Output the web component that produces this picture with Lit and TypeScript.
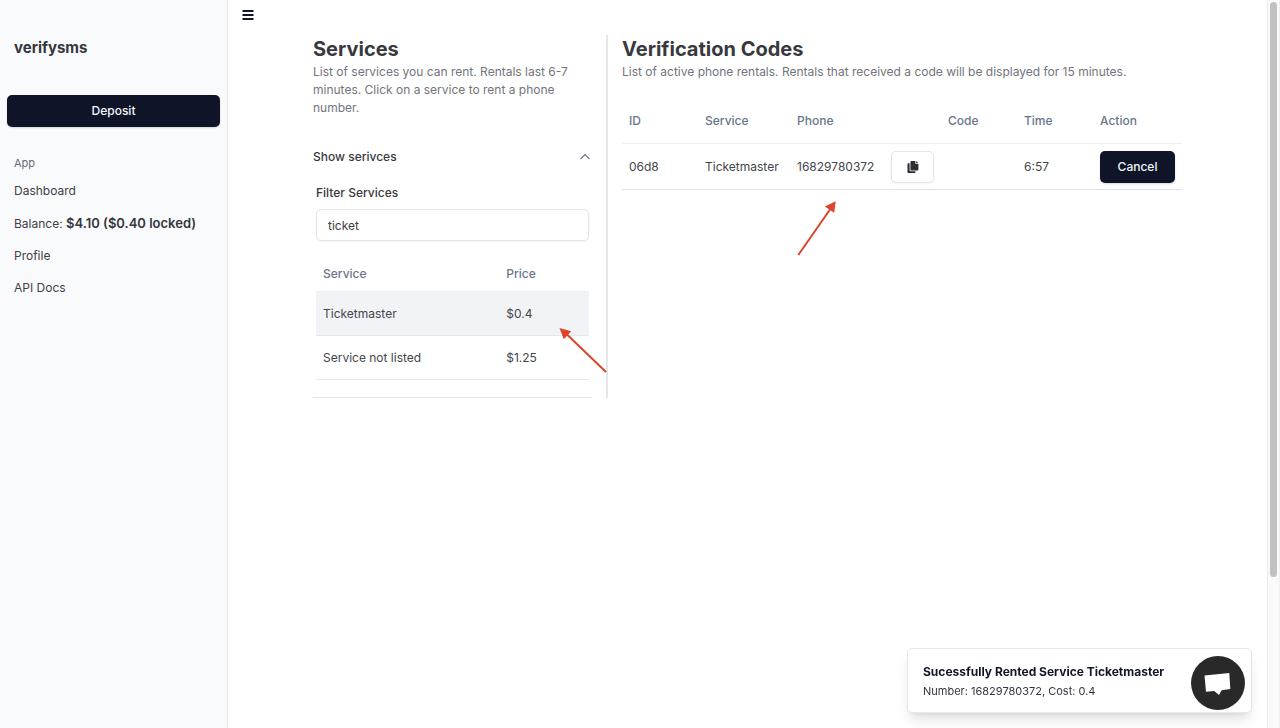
import { LitElement, html, css } from "lit";
import { customElement, property, state } from "lit/decorators.js";

interface Service {
  name: string;
  price: string;
}

interface Rental {
  id: string;
  service: string;
  phone: string;
  code: string;
  time: string;
}

@customElement("side-nav")
class SideNav extends LitElement {
  static styles = css`
    :host {
      display: block;
      box-sizing: border-box;
      background: #f9fafc;
      border-right: 1px solid #e5e7eb;
      padding: 33px 7px;
    }
    .brand {
      margin: 0;
      padding: 0 7px;
      font-size: 15px;
      line-height: 30px;
      font-weight: 700;
      color: #35363b;
    }
    .deposit {
      display: block;
      width: 100%;
      height: 32px;
      margin-top: 32px;
      border: 0;
      border-radius: 5px;
      background: #0f1428;
      color: #f5f6fa;
      font: 500 12px/18px Inter, sans-serif;
      box-shadow: 0 1px 2px rgba(0, 0, 0, 0.15);
    }
    .group {
      margin: 28px 0 4px;
      padding: 0 7px;
      font-size: 11px;
      line-height: 16px;
      font-weight: 400;
      color: #6b6c73;
    }
    .link {
      display: block;
      padding: 0 7px;
      font-size: 12px;
      line-height: 32px;
      color: #3f4046;
      text-decoration: none;
    }
    .amount {
      font-size: 13px;
      font-weight: 600;
      color: #35363b;
    }
  `;

  render() {
    return html`
      <h1 class="brand">verifysms</h1>
      <button class="deposit" type="button">Deposit</button>
      <h2 class="group">App</h2>
      <nav>
        <a class="link" href="#dashboard">Dashboard</a>
        <a class="link" href="#balance">Balance: <span class="amount">$4.10 ($0.40 locked)</span></a>
        <a class="link" href="#profile">Profile</a>
        <a class="link" href="#docs">API Docs</a>
      </nav>
    `;
  }
}

const panelStyles = css`
  .title {
    margin: 0;
    font-size: 20px;
    line-height: 28px;
    font-weight: 700;
    color: #38393e;
  }
  .lead {
    margin: 0;
    font-size: 12px;
    line-height: 18px;
    color: #73747c;
  }
  table {
    width: 100%;
    border-collapse: separate;
    border-spacing: 0;
    table-layout: fixed;
    font-size: 12px;
    line-height: 18px;
  }
  th {
    padding: 0 7px;
    text-align: left;
    font-weight: 500;
    color: #68758b;
    border-bottom: 1px solid #eeeff2;
  }
  td {
    padding: 0 7px;
    color: #44454b;
    white-space: nowrap;
  }
`;

@customElement("service-list")
class ServiceList extends LitElement {
  @state() private services: Service[] = [
    { name: "Ticketmaster", price: "$0.4" },
    { name: "Service not listed", price: "$1.25" },
  ];

  static styles = [
    panelStyles,
    css`
      :host {
        display: block;
        position: relative;
      }
      .toggle {
        display: flex;
        align-items: center;
        justify-content: space-between;
        width: 100%;
        margin-top: 16px;
        padding: 15px 0;
        border: 0;
        background: none;
        font: 500 12px/18px Inter, sans-serif;
        color: #38393e;
      }
      .chevron {
        width: 14px;
        height: 14px;
      }
      .body {
        padding: 3px 3px 17px;
        border-bottom: 1px solid #e4e5e9;
      }
      .label {
        display: block;
        font-size: 12px;
        line-height: 18px;
        font-weight: 500;
        color: #38393e;
      }
      .filter {
        display: block;
        box-sizing: border-box;
        width: 100%;
        height: 32px;
        margin: 7px 0 15px;
        padding: 0 11px;
        border: 1px solid #e4e5ec;
        border-radius: 5px;
        background: #fff;
        font: 400 12px/18px Inter, sans-serif;
        color: #3f4046;
        box-shadow: 0 1px 2px rgba(0, 0, 0, 0.05);
        outline: none;
      }
      .name {
        width: 62%;
      }
      th {
        height: 35px;
      }
      td {
        height: 43px;
        border-bottom: 1px solid #e6e7ea;
      }
      .selected td {
        background: #f2f3f6;
      }
      .pointer {
        position: absolute;
        left: 245px;
        top: 291px;
        width: 50px;
        height: 48px;
      }
    `,
  ];

  render() {
    return html`
      <h2 class="title">Services</h2>
      <p class="lead">
        List of services you can rent. Rentals last 6-7 minutes. Click on a service to rent a phone number.
      </p>
      <button class="toggle" type="button" aria-expanded="true">
        Show serivces
        <svg class="chevron" viewBox="0 0 14 14" fill="none" stroke="#6b7280" stroke-width="1.1" aria-hidden="true">
          <path d="M2.6 9 L7 4.6 L11.4 9" />
        </svg>
      </button>
      <div class="body">
        <label class="label" for="filter">Filter Services</label>
        <input class="filter" id="filter" type="text" .value=${"ticket"} />
        <table>
          <thead>
            <tr><th class="name">Service</th><th>Price</th></tr>
          </thead>
          <tbody>
            ${this.services.map(
              (s, i) => html`<tr class=${i === 0 ? "selected" : ""}><td>${s.name}</td><td>${s.price}</td></tr>`
            )}
          </tbody>
        </table>
      </div>
      <svg class="pointer" viewBox="0 0 50 48" aria-hidden="true">
        <path d="M9 8.5 L48 46" stroke="#dc442b" stroke-width="2" />
        <path d="M1.5 2 L13.2 5.2 L5.8 13.2 Z" fill="#dc442b" />
      </svg>
    `;
  }
}

@customElement("rental-list")
class RentalList extends LitElement {
  @state() private rentals: Rental[] = [
    { id: "06d8", service: "Ticketmaster", phone: "16829780372", code: "", time: "6:57" },
  ];

  static styles = [
    panelStyles,
    css`
      :host {
        display: block;
        position: relative;
      }
      table {
        margin-top: 18px;
      }
      th {
        height: 44px;
      }
      td {
        height: 45px;
        border-bottom: 1px solid #e2e3ea;
      }
      .short {
        width: 62px;
      }
      .service {
        width: 78px;
      }
      .phone {
        width: 137px;
      }
      .number {
        display: flex;
        align-items: center;
        justify-content: space-between;
      }
      .copy {
        display: flex;
        align-items: center;
        justify-content: center;
        box-sizing: border-box;
        width: 43px;
        height: 32px;
        padding: 0;
        border: 1px solid #e4e5ec;
        border-radius: 5px;
        background: #fff;
        box-shadow: 0 1px 2px rgba(0, 0, 0, 0.05);
      }
      .cancel {
        display: block;
        width: 75px;
        height: 32px;
        padding: 0;
        border: 0;
        border-radius: 5px;
        background: #0f1428;
        color: #f5f6fa;
        font: 500 12px/18px Inter, sans-serif;
        box-shadow: 0 1px 2px rgba(0, 0, 0, 0.15);
      }
      .pointer {
        position: absolute;
        left: 174px;
        top: 165px;
        width: 42px;
        height: 57px;
      }
    `,
  ];

  render() {
    return html`
      <h2 class="title">Verification Codes</h2>
      <p class="lead">
        List of active phone rentals. Rentals that received a code will be displayed for 15 minutes.
      </p>
      <table>
        <thead>
          <tr>
            <th class="short">ID</th>
            <th class="service">Service</th>
            <th class="phone">Phone</th>
            <th class="short">Code</th>
            <th class="short">Time</th>
            <th>Action</th>
          </tr>
        </thead>
        <tbody>
          ${this.rentals.map(
            (r) => html`<tr>
              <td>${r.id}</td>
              <td>${r.service}</td>
              <td>
                <div class="number">
                  ${r.phone}
                  <button class="copy" type="button" aria-label="Copy number">
                    <svg width="12" height="14" viewBox="0 0 12 14" fill="#2c2d33" aria-hidden="true">
                      <path d="M4.3 1 H8.4 V4 H11.4 V9.6 A0.9 0.9 0 0 1 10.5 10.5 H4.3 A0.9 0.9 0 0 1 3.4 9.6 V1.9 A0.9 0.9 0 0 1 4.3 1 Z" />
                      <path d="M9.1 1 L11.4 3.3 H9.1 Z" />
                      <path d="M1.2 3.2 H2.6 V10.3 A1 1 0 0 0 3.6 11.3 H8.4 V12.2 A0.9 0.9 0 0 1 7.5 13.1 H1.4 A0.9 0.9 0 0 1 0.5 12.2 V4 A0.8 0.8 0 0 1 1.2 3.2 Z" />
                    </svg>
                  </button>
                </div>
              </td>
              <td>${r.code}</td>
              <td>${r.time}</td>
              <td><button class="cancel" type="button">Cancel</button></td>
            </tr>`
          )}
        </tbody>
      </table>
      <svg class="pointer" viewBox="0 0 42 57" aria-hidden="true">
        <path d="M2.3 55 L34 9.5" stroke="#dc442b" stroke-width="2" />
        <path d="M39.7 1.2 L38.2 12.8 L28.8 6.6 Z" fill="#dc442b" />
      </svg>
    `;
  }
}

@customElement("toast-message")
class ToastMessage extends LitElement {
  @property() heading = "";
  @property() detail = "";

  static styles = css`
    :host {
      display: block;
      box-sizing: border-box;
      padding: 14px 70px 13px 15px;
      border: 1px solid #e6e7eb;
      border-radius: 5px;
      background: #fff;
      box-shadow: 0 9px 14px -3px rgba(0, 0, 0, 0.12), 0 4px 6px -4px rgba(0, 0, 0, 0.1);
    }
    .heading {
      margin: 0;
      font-size: 12px;
      line-height: 18px;
      font-weight: 700;
      color: #111528;
      white-space: nowrap;
    }
    .detail {
      margin: 2px 0 0;
      font-size: 11px;
      line-height: 16px;
      color: #33353f;
    }
  `;

  render() {
    return html`
      <p class="heading">${this.heading}</p>
      <p class="detail">${this.detail}</p>
    `;
  }
}

@customElement("app-root")
class AppRoot extends LitElement {
  static styles = css`
    :host {
      display: grid;
      grid-template-columns: 228px minmax(0, 1fr) 13px;
      min-height: 100vh;
      background: #fff;
      font-family: Inter, sans-serif;
    }
    .main {
      padding: 8px 14px;
    }
    .menu {
      display: block;
      width: 13px;
      height: 14px;
      padding: 0;
      border: 0;
      background: none;
    }
    .menu svg {
      display: block;
    }
    .content {
      display: grid;
      grid-template-columns: minmax(0, 295px) minmax(0, 560px);
      column-gap: 14px;
      justify-content: center;
      align-items: start;
      margin-top: 13px;
    }
    .services {
      padding-right: 14px;
      border-right: 2px solid #e5e6ea;
    }
    .scroll {
      box-sizing: border-box;
      padding: 2px 2px;
      background: #fafafa;
      border-left: 1px solid #ebebeb;
      border-right: 1px solid #f0f0f0;
    }
    .thumb {
      width: 7px;
      height: 79vh;
      margin: 0 auto;
      border-radius: 4px;
      background: #c1c1c1;
    }
    .toast {
      position: fixed;
      right: 28px;
      bottom: 15px;
      width: 345px;
    }
    .chat {
      position: fixed;
      right: 35px;
      bottom: 18px;
      width: 54px;
      height: 54px;
      padding: 0;
      border: 0;
      border-radius: 50%;
      background: #292929;
    }
    .chat svg {
      display: block;
    }
  `;

  render() {
    return html`
      <side-nav></side-nav>
      <main class="main">
        <button class="menu" type="button" aria-label="Menu">
          <svg width="13" height="14" viewBox="0 0 13 14" stroke="#111528" stroke-width="2" aria-hidden="true">
            <path d="M0.5 3 H11.5 M0.5 7 H11.5 M0.5 11 H11.5" />
          </svg>
        </button>
        <div class="content">
          <service-list class="services"></service-list>
          <rental-list></rental-list>
        </div>
      </main>
      <div class="scroll"><div class="thumb"></div></div>
      <toast-message
        class="toast"
        role="status"
        heading="Sucessfully Rented Service Ticketmaster"
        detail="Number: 16829780372, Cost: 0.4"
      ></toast-message>
      <button class="chat" type="button" aria-label="Open chat">
        <svg width="54" height="54" viewBox="0 0 54 54" aria-hidden="true">
          <path d="M13.5 19.6 L38.3 17 L39.3 33.1 L30.6 34.3 L28 39 L23.2 35 L15 35.8 Z" fill="#fff" />
        </svg>
      </button>
    `;
  }
}
